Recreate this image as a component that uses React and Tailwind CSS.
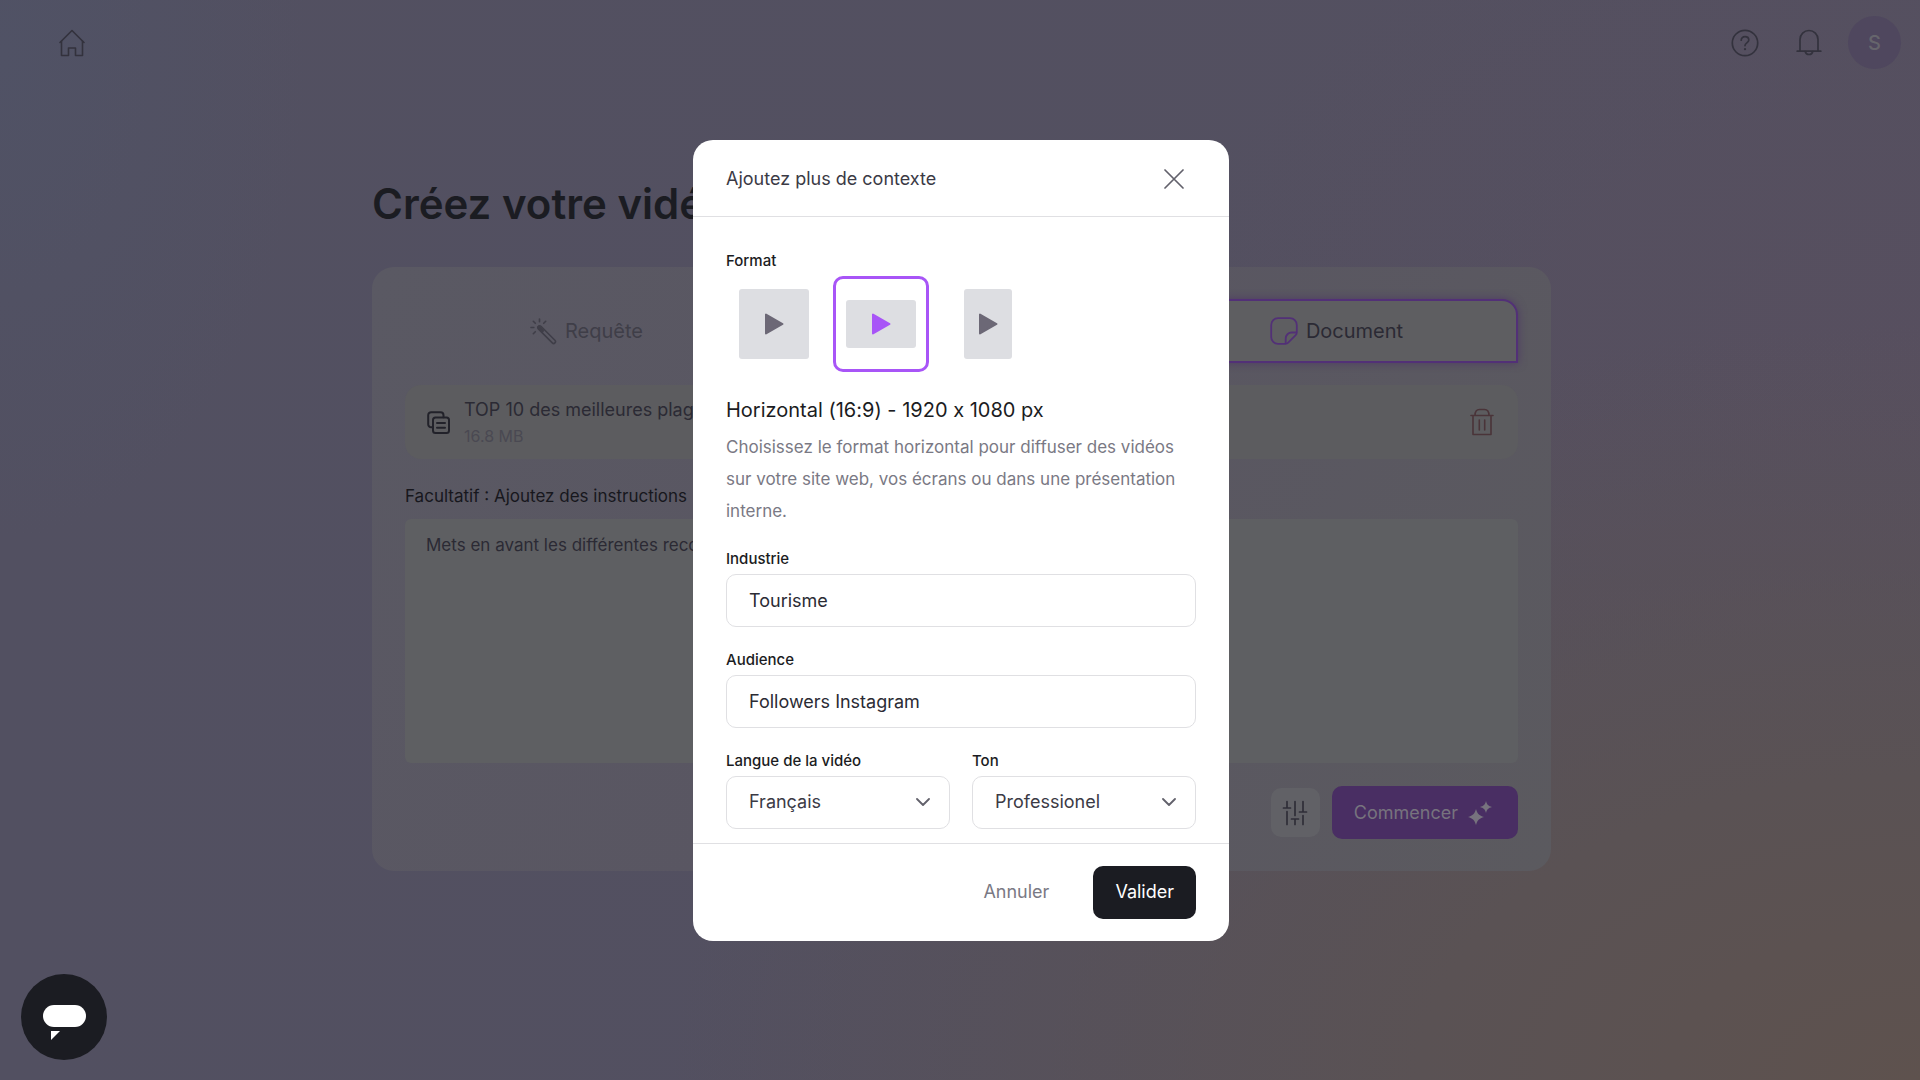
import React from "react";

const formats = [
  { id: "square", label: "Carré (1:1)", box: "h-[70px] w-[70px]", checked: false },
  { id: "horizontal", label: "Horizontal (16:9)", box: "h-12 w-[70px]", checked: true },
  { id: "vertical", label: "Vertical (9:16)", box: "h-[70px] w-12", checked: false },
];

function HomeIcon() {
  return (
    <svg width="26" height="28" viewBox="0 0 26 28" fill="none" stroke="currentColor" strokeWidth="1.6" strokeLinejoin="round" strokeLinecap="round">
      <path d="M1 13.5 13 1.5l12 12" />
      <path d="M2.5 12.2v14.3h7V19h7v7.5h7V12.2" />
    </svg>
  );
}

function HelpIcon() {
  return (
    <svg width="28" height="28" viewBox="0 0 28 28" fill="none" stroke="currentColor" strokeWidth="1.7" strokeLinecap="round">
      <circle cx="14" cy="14" r="12.7" />
      <path d="M10.2 11.2c0-2.2 1.7-3.6 3.8-3.6s3.8 1.4 3.8 3.4c0 2.8-3.8 3-3.8 5.6" />
      <path d="M14 20v.2" strokeWidth="2.2" />
    </svg>
  );
}

function BellIcon() {
  return (
    <svg width="26" height="28" viewBox="0 0 26 28" fill="none" stroke="currentColor" strokeWidth="1.7" strokeLinecap="round">
      <path d="M4 22.2V10.5a9 9 0 0 1 18 0v11.7" />
      <path d="M1.2 22.2h23.6" />
      <path d="M9.2 22.5a3.9 3.9 0 0 0 7.6 0" />
    </svg>
  );
}

function WandIcon() {
  return (
    <svg width="27" height="27" viewBox="0 0 27 27" fill="none" stroke="currentColor" strokeWidth="1.6" strokeLinecap="round" strokeLinejoin="round">
      <path d="M8.3 8.3a1.8 1.8 0 0 1 2.6 0l14 14a1.8 1.8 0 0 1-2.6 2.6l-14-14a1.8 1.8 0 0 1 0-2.6z" />
      <path d="M9 9.2l3.5 3.5" strokeWidth="3" />
      <path d="M9.5 1v2.8M1 9.5h2.8M3.3 3.3l2 2M15.7 3.3l-2 2M3.3 15.7l2-2" />
    </svg>
  );
}

function NoteIcon() {
  return (
    <svg width="28" height="28" viewBox="0 0 28 28" fill="none" stroke="currentColor" strokeWidth="1.8" strokeLinejoin="round">
      <path d="M8 1.2h12a6.8 6.8 0 0 1 6.8 6.8v7.5c0 1-.4 2-1.1 2.7l-7.5 7.5c-.7.7-1.7 1.1-2.7 1.1H8A6.8 6.8 0 0 1 1.2 20V8A6.8 6.8 0 0 1 8 1.2z" />
      <path d="M26.7 15.5h-5a6 6 0 0 0-6 6v5.2" />
    </svg>
  );
}

function CopyIcon() {
  return (
    <svg width="23" height="23" viewBox="0 0 23 23" fill="none" stroke="currentColor" strokeWidth="2" strokeLinecap="round" strokeLinejoin="round">
      <rect x="6" y="6.5" width="16" height="15.5" rx="2.5" />
      <path d="M6 16.3H4.5A3 3 0 0 1 1.2 13.3V4.2A3 3 0 0 1 4.2 1.2h9.3a3 3 0 0 1 3 3v2" />
      <path d="M10 12h8M10 16.8h8" />
    </svg>
  );
}

function TrashIcon() {
  return (
    <svg width="24" height="28" viewBox="0 0 24 28" fill="none" stroke="currentColor" strokeWidth="1.6" strokeLinecap="round" strokeLinejoin="round">
      <path d="M1 7.5h22M3 7.5v19h18v-19M5 7.5c0-4 1.5-6 4.500-6h5c3 0 4.500 2 4.500 6" />
      <path d="M9.3 12v10M14.7 12v10" />
    </svg>
  );
}

function SlidersIcon() {
  return (
    <svg width="26" height="26" viewBox="0 0 26 26" fill="none" stroke="currentColor" strokeWidth="1.7" strokeLinecap="round">
      <path d="M5 1.5v6M1.5 8h7M5 11.5v13" />
      <path d="M13 1.5v14M9.5 19h7M13 19v5.5" />
      <path d="M21 1.5v10M17.5 12h7M21 15.5v9" />
    </svg>
  );
}

function SparklesIcon() {
  return (
    <svg width="24" height="24" viewBox="0 0 24 24" fill="currentColor">
      <path d="M8 8c1.2 4.6 3.2 6.6 8 8-4.8 1.4-6.8 3.4-8 8-1.2-4.6-3.2-6.6-8-8 4.8-1.4 6.8-3.4 8-8z" />
      <path d="M18 0c.9 3.6 2.3 5 6 6-3.7 1-5.1 2.4-6 6-.9-3.6-2.3-5-6-6 3.7-1 5.1-2.4 6-6z" />
    </svg>
  );
}

function PlayIcon() {
  return (
    <svg width="20" height="22" viewBox="0 0 20 22" fill="currentColor" stroke="currentColor" strokeWidth="2" strokeLinejoin="round">
      <path d="M2 1.5v19L18.5 11z" />
    </svg>
  );
}

function CloseIcon() {
  return (
    <svg width="20" height="20" viewBox="0 0 20 20" fill="none" stroke="currentColor" strokeWidth="1.7" strokeLinecap="round">
      <path d="M1 1l18 18M19 1 1 19" />
    </svg>
  );
}

function ChevronIcon() {
  return (
    <svg className="pointer-events-none absolute top-1/2 right-5 -translate-y-1/2" width="14" height="8" viewBox="0 0 14 8" fill="none" stroke="#62616b" strokeWidth="1.8" strokeLinecap="round" strokeLinejoin="round">
      <path d="M1 1l6 6 6-6" />
    </svg>
  );
}

function TextField({ id, label, value }) {
  return (
    <div className="flex flex-col gap-[5px]">
      <label htmlFor={id} className="text-[15px] leading-5 font-medium text-[#1b1c22]">{label}</label>
      <input id={id} type="text" defaultValue={value} className="h-[53px] w-full rounded-[10px] border border-[#e0e0e3] bg-white px-[22px] text-lg text-[#2b2b34] outline-none" />
    </div>
  );
}

function SelectField({ id, label, value }) {
  return (
    <div className="flex min-w-0 flex-1 flex-col gap-[5px]">
      <label htmlFor={id} className="text-[15px] leading-5 font-medium text-[#1b1c22]">{label}</label>
      <div className="relative">
        <select id={id} defaultValue={value} className="h-[53px] w-full appearance-none rounded-[10px] border border-[#e0e0e3] bg-white px-[22px] text-lg text-[#3b3a45] outline-none">
          <option>{value}</option>
        </select>
        <ChevronIcon />
      </div>
    </div>
  );
}

function ContextDialog() {
  return (
    <div className="fixed inset-0 flex items-center justify-center pl-0.5">
      <div role="dialog" aria-labelledby="dialog-title" className="w-full max-w-[536px] rounded-[20px] bg-white">
        <div className="flex h-[77px] items-center justify-between border-b border-[#e0e0e3] pt-0.5 pr-[45px] pl-[33px]">
          <h2 id="dialog-title" className="text-lg text-[#3b3a45]">Ajoutez plus de contexte</h2>
          <button type="button" aria-label="Fermer" className="text-[#62616b]"><CloseIcon /></button>
        </div>
        <div className="px-[33px] pt-[34px] pb-[14px]">
          <fieldset>
            <legend className="text-[15px] leading-5 font-medium text-[#1b1c22]">Format</legend>
            <div className="mt-[5px] flex gap-[11px]">
              {formats.map((f) => (
                <label key={f.id} className="flex h-24 w-24 items-center justify-center rounded-[10px] border-[3px] border-transparent text-[#6c6876] has-checked:border-[#a855f7] has-checked:text-[#a855f7]">
                  <input type="radio" name="format" aria-label={f.label} defaultChecked={f.checked} className="sr-only" />
                  <span className={`flex items-center justify-center rounded-[3px] bg-[#dddee2] ${f.box}`}><PlayIcon /></span>
                </label>
              ))}
            </div>
          </fieldset>
          <h3 className="mt-6 text-xl leading-7 text-[#1b1c22] [font-feature-settings:'calt'_0]">Horizontal (16:9) - 1920 x 1080 px</h3>
          <p className="mt-[7px] text-[17px] leading-8 text-[#7a7984]">
            Choisissez le format horizontal pour diffuser des vidéos sur votre site web, vos écrans ou dans une présentation interne.
          </p>
          <div className="mt-[22px] flex flex-col gap-[23px]">
            <TextField id="industry" label="Industrie" value="Tourisme" />
            <TextField id="audience" label="Audience" value="Followers Instagram" />
            <div className="flex gap-[22px]">
              <SelectField id="language" label="Langue de la vidéo" value="Français" />
              <SelectField id="tone" label="Ton" value="Professionel" />
            </div>
          </div>
        </div>
        <div className="flex items-center justify-end gap-[22px] border-t border-[#e0e0e3] px-[33px] pt-[22px] pb-[22px]">
          <button type="button" className="h-[53px] px-[22px] text-lg text-[#7a7984]">Annuler</button>
          <button type="button" className="h-[53px] rounded-[10px] bg-[#1b1c22] px-[22px] text-lg text-white">Valider</button>
        </div>
      </div>
    </div>
  );
}

export default function App() {
  return (
    <div className="min-h-screen bg-[radial-gradient(ellipse_65%_70%_at_100%_100%,#5e524e_0%,#5a5254_40%,transparent_100%),radial-gradient(ellipse_40%_50%_at_100%_35%,#574f5f_0%,transparent_100%),radial-gradient(ellipse_16%_45%_at_0%_5%,#505265_0%,transparent_100%),linear-gradient(90deg,#525061_0%,#545060_100%)] font-['Inter','Liberation_Sans',sans-serif]">
      <header className="flex h-[85px] items-center justify-between pr-[19px] pl-[59px] text-[#33323d]">
        <a href="#" aria-label="Accueil"><HomeIcon /></a>
        <div className="flex items-center">
          <button type="button" aria-label="Aide"><HelpIcon /></button>
          <button type="button" aria-label="Notifications" className="mr-[26px] ml-[37px]"><BellIcon /></button>
          <button type="button" className="h-[53px] w-[53px] rounded-full bg-[#4f475e] text-xl font-medium text-[#66656c]">S</button>
        </div>
      </header>

      <main className="pl-[3px]">
        <div className="mx-auto max-w-[1179px]">
          <h1 className="pt-[91px] text-[42px] leading-[56px] font-semibold text-[#1b1c22]">Créez votre vidéo</h1>
          <section className="mt-[35px] rounded-[22px] bg-[linear-gradient(120deg,#5a5963_0%,#595662_45%,#5b5a5f_100%)] px-[33px] py-8">
            <div role="tablist" className="grid grid-cols-3 gap-3">
              <button type="button" role="tab" className="flex h-16 items-center justify-center gap-2 text-xl text-[#3f3e48]"><WandIcon />Requête</button>
              <button type="button" role="tab" className="h-16 text-xl text-[#3f3e48]">Lien</button>
              <button type="button" role="tab" aria-selected="true" className="flex h-16 items-center justify-center gap-2 rounded-tr-2xl border-2 border-[#523077] bg-[#5e5e61] text-xl text-[#2b2a34] shadow-[0_0_8px_#4e3a64]">
                <span className="text-[#523077]"><NoteIcon /></span>Document
              </button>
            </div>

            <div className="mt-[22px] flex h-[74px] items-center rounded-2xl bg-[#5c5c5f] pr-6 pl-[22px]">
              <span className="text-[#22222a]"><CopyIcon /></span>
              <div className="ml-[14px] flex-1">
                <p className="text-lg leading-7 text-[#2b2a34]">TOP 10 des meilleures plages</p>
                <p className="text-base leading-6 text-[#4a4952]">16.8 MB</p>
              </div>
              <button type="button" aria-label="Supprimer" className="text-[#4a3439]"><TrashIcon /></button>
            </div>

            <label htmlFor="instructions" className="mt-[23px] block text-[17px] leading-7 text-[#17171d]">Facultatif : Ajoutez des instructions</label>
            <textarea id="instructions" defaultValue="Mets en avant les différentes recommandations" className="mt-[9px] block h-[244px] w-full resize-none rounded-md bg-[#5e5f62] px-[21px] py-3 text-[17px] leading-7 text-[#2b2a34] outline-none" />

            <div className="mt-[23px] flex items-center justify-end gap-3">
              <button type="button" aria-label="Paramètres" className="flex h-[49px] w-[49px] items-center justify-center rounded-[10px] bg-[#616166] text-[#2f2e38]"><SlidersIcon /></button>
              <button type="button" className="flex h-[53px] items-center gap-[10px] rounded-[10px] bg-[#492e63] pr-[26px] pl-[22px] text-lg text-[#77737e]">Commencer<SparklesIcon /></button>
            </div>
          </section>
        </div>
      </main>

      <ContextDialog />

      <button type="button" aria-label="Ouvrir le chat" className="fixed bottom-5 left-[21px] flex h-[86px] w-[86px] items-center justify-center rounded-full bg-[#1b1c22]">
        <svg width="86" height="86" viewBox="0 0 86 86" fill="#ffffff">
          <rect x="22" y="31" width="43" height="22" rx="11" />
          <path d="M30 57h9l-9 9z" />
        </svg>
      </button>
    </div>
  );
}
